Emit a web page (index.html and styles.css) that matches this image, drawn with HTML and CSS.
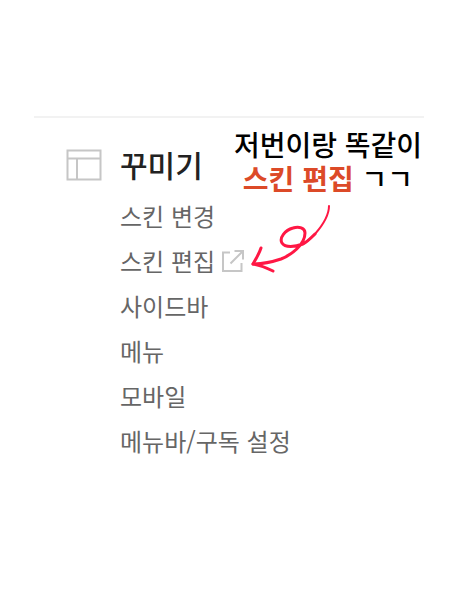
FILE: index.html
```
<!DOCTYPE html>
<html lang="ko">
<head>
    <meta charset="UTF-8">
    <meta name="viewport" content="width=device-width, initial-scale=1.0">
    <title>꾸미기</title>
    <link rel="stylesheet" href="styles.css">
</head>
<body>
    <nav class="menu-section">
        <svg class="layout-icon" viewBox="0 0 36 32" aria-hidden="true">
            <path d="M1.5 1.5H34.5V30.5H1.5ZM1.5 9.5H34.5M11 9.5V30.5"/>
        </svg>
        <div class="menu">
            <h2>꾸미기</h2>
            <ul>
                <li><a href="#">스킨 변경</a></li>
                <li>
                    <a href="#">스킨 편집
                        <svg class="link-icon" viewBox="0 0 24 24" aria-hidden="true">
                            <path d="M9 3.5H2V22H20.5V14M9.5 14.5L21 3M13.5 2H22V10.5"/>
                        </svg>
                    </a>
                </li>
                <li><a href="#">사이드바</a></li>
                <li><a href="#">메뉴</a></li>
                <li><a href="#">모바일</a></li>
                <li><a href="#">메뉴바/구독 설정</a></li>
            </ul>
        </div>

        <!-- Note over the menu -->
        <div class="note">
            <p>저번이랑 똑같이</p>
            <p><strong>스킨 편집</strong> ㄱㄱ</p>
            <svg class="arrow" viewBox="0 0 80 70" aria-hidden="true">
                <path class="thin" d="M79 3C79 12 72 23 65 31C61 35 57 39 53 41"/>
                <path d="M65 31C61 35 57 39 53 41C45 44 35 45 32 40C29 35 35 27 43 25C49 23 55 25 55 30C55 42 41 52 31 56C22 59 13 61 3 61"/>
                <path d="M11 45C9 51 6 56 3 61C10 62 17 65 23 68"/>
            </svg>
        </div>
    </nav>
</body>
</html>
```

FILE: styles.css
```
* {
    margin: 0;
    padding: 0;
    box-sizing: border-box;
}

body {
    font-family: "Noto Sans CJK KR", sans-serif;
    background-color: #fff;
    color: #666;
    padding: 116px 34px;
}

.menu-section {
    position: relative;
    display: flex;
    gap: 18px;
    padding: 24px 0 0 32px;
    border-top: 2px solid #f2f2f2;
}

.layout-icon {
    flex: none;
    width: 36px;
    height: 32px;
    margin-top: 7px;
}

.layout-icon path,
.link-icon path {
    fill: none;
    stroke: #c6c6c6;
    stroke-width: 2;
}

/* Menu */
.menu h2 {
    font-size: 30px;
    line-height: 44px;
    font-weight: 500;
    color: #222;
    margin-bottom: 6px;
}

.menu ul {
    list-style: none;
}

.menu li {
    height: 45px;
}

.menu a {
    display: flex;
    align-items: center;
    gap: 6px;
    font-size: 24px;
    line-height: 48px;
    color: #666;
    text-decoration: none;
}

.link-icon {
    width: 24px;
    height: 24px;
}

/* Note */
.note {
    position: absolute;
    top: 9px;
    right: 0;
    width: 192px;
    text-align: center;
    color: #000;
}

.note p {
    font-size: 28px;
    line-height: 34px;
    font-weight: 500;
    white-space: nowrap;
}

.note strong {
    font-weight: 700;
    color: #dc4a28;
}

.arrow {
    display: block;
    width: 80px;
    height: 70px;
    margin: 8px 0 0 18px;
}

.arrow path {
    fill: none;
    stroke: #ff1744;
    stroke-width: 3;
    stroke-linecap: round;
    stroke-linejoin: round;
}

.arrow .thin {
    stroke-width: 2;
}
```
